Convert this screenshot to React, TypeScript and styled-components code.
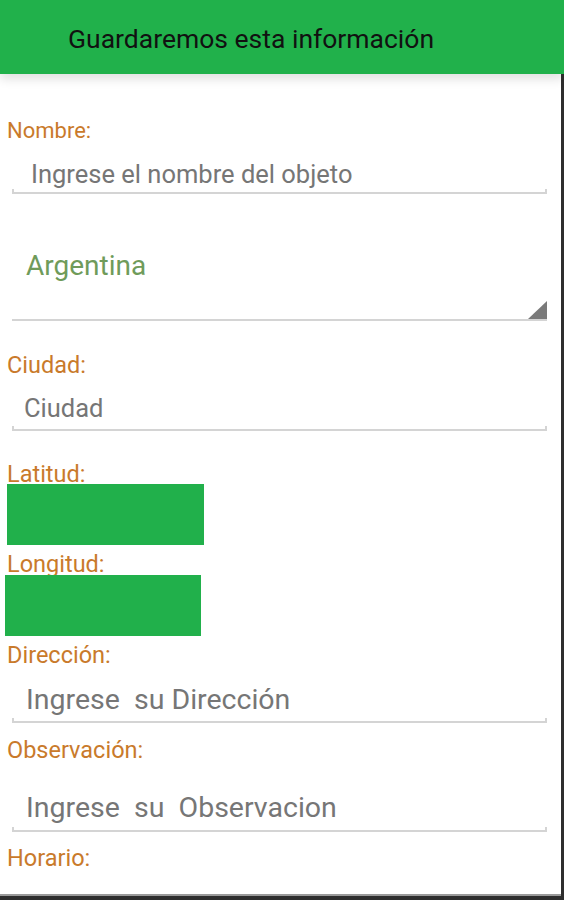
import styled, { createGlobalStyle } from 'styled-components'

const GlobalStyle = createGlobalStyle`
  html, body {
    margin: 0;
    padding: 0;
    background: #fff;
  }
  * {
    box-sizing: border-box;
  }
`

const Screen = styled.div`
  display: flex;
  flex-direction: column;
  width: 564px;
  height: 900px;
  overflow: hidden;
  font-family: Roboto, 'Noto Sans', Arial, sans-serif;
  background: #fff;
  border-bottom: 4px solid #2e2e2e;
  box-shadow: inset 0 -2px 0 #9a9a9a;
`

const Header = styled.header`
  position: relative;
  z-index: 1;
  display: flex;
  align-items: center;
  height: 74px;
  flex-shrink: 0;
  padding: 2px 0 0 68px;
  background: #21b14b;
  color: #111;
  font-size: 26.5px;
  box-shadow: 0 5px 10px rgba(0, 0, 0, 0.12);
`

const Content = styled.main`
  flex: 1;
  display: flex;
  flex-direction: column;
  padding-top: 43px;
  border-right: 3px solid #2e2e2e;
`

const Label = styled.div<{ $gap?: number; $size?: number }>`
  margin-top: ${(p) => p.$gap ?? 0}px;
  padding-left: 7px;
  height: 24px;
  line-height: 27px;
  font-size: ${(p) => p.$size ?? 23.5}px;
  color: #c97a2b;
  white-space: nowrap;
`

const EditText = styled.div<{
  $top: number
  $bottom: number
  $size: number
  $line: number
  $indent: number
}>`
  position: relative;
  margin: 0 14px 0 12px;
  padding: ${(p) => p.$top}px 0 ${(p) => p.$bottom}px ${(p) => p.$indent}px;
  line-height: ${(p) => p.$line}px;
  font-size: ${(p) => p.$size}px;
  color: #767676;
  white-space: pre;
  border-bottom: 2px solid #d4d4d4;

  &::before,
  &::after {
    content: '';
    position: absolute;
    bottom: -2px;
    width: 2px;
    height: 5px;
    background: #d4d4d4;
  }
  &::before {
    left: 0;
  }
  &::after {
    right: 0;
  }
`

const Spinner = styled.div`
  display: flex;
  justify-content: space-between;
  margin: 0 14px 0 12px;
  padding-top: 55px;
  border-bottom: 2px solid #d4d4d4;
`

const SpinnerValue = styled.span`
  padding-left: 14px;
  padding-bottom: 36px;
  line-height: 34px;
  font-size: 28px;
  color: #6f9b5a;
`

const SpinnerArrow = styled.span`
  align-self: flex-end;
  width: 0;
  height: 0;
  border-left: 19px solid transparent;
  border-bottom: 18px solid #7a7a7a;
`

const GreenBox = styled.div<{ $left: number; $width: number; $gap?: number }>`
  margin-top: ${(p) => p.$gap ?? 0}px;
  margin-left: ${(p) => p.$left}px;
  width: ${(p) => p.$width}px;
  height: 61px;
  background: #21b04b;
`

export default function App() {
  return (
    <>
      <GlobalStyle />
      <Screen>
        <Header>Guardaremos esta información</Header>
        <Content>
          <Label $size={22}>Nombre:</Label>
          <EditText $top={18} $bottom={3} $size={25.5} $line={30} $indent={19}>
            Ingrese el nombre del objeto
          </EditText>

          <Spinner>
            <SpinnerValue>Argentina</SpinnerValue>
            <SpinnerArrow />
          </Spinner>

          <Label $gap={31}>Ciudad:</Label>
          <EditText $top={17} $bottom={6} $size={25.5} $line={30} $indent={12}>
            Ciudad
          </EditText>

          <Label $gap={30}>Latitud:</Label>
          <GreenBox $left={7} $width={197} $gap={-1} />

          <Label $gap={6}>Longitud:</Label>
          <GreenBox $left={5} $width={196} />

          <Label $gap={6}>Dirección:</Label>
          <EditText $top={17} $bottom={4} $size={28.5} $line={34} $indent={14}>
            {'Ingrese  su Dirección'}
          </EditText>

          <Label $gap={14}>Observación:</Label>
          <EditText $top={30} $bottom={5} $size={28.5} $line={34} $indent={14}>
            {'Ingrese  su  Observacion'}
          </EditText>

          <Label $gap={13}>Horario:</Label>
        </Content>
      </Screen>
    </>
  )
}
